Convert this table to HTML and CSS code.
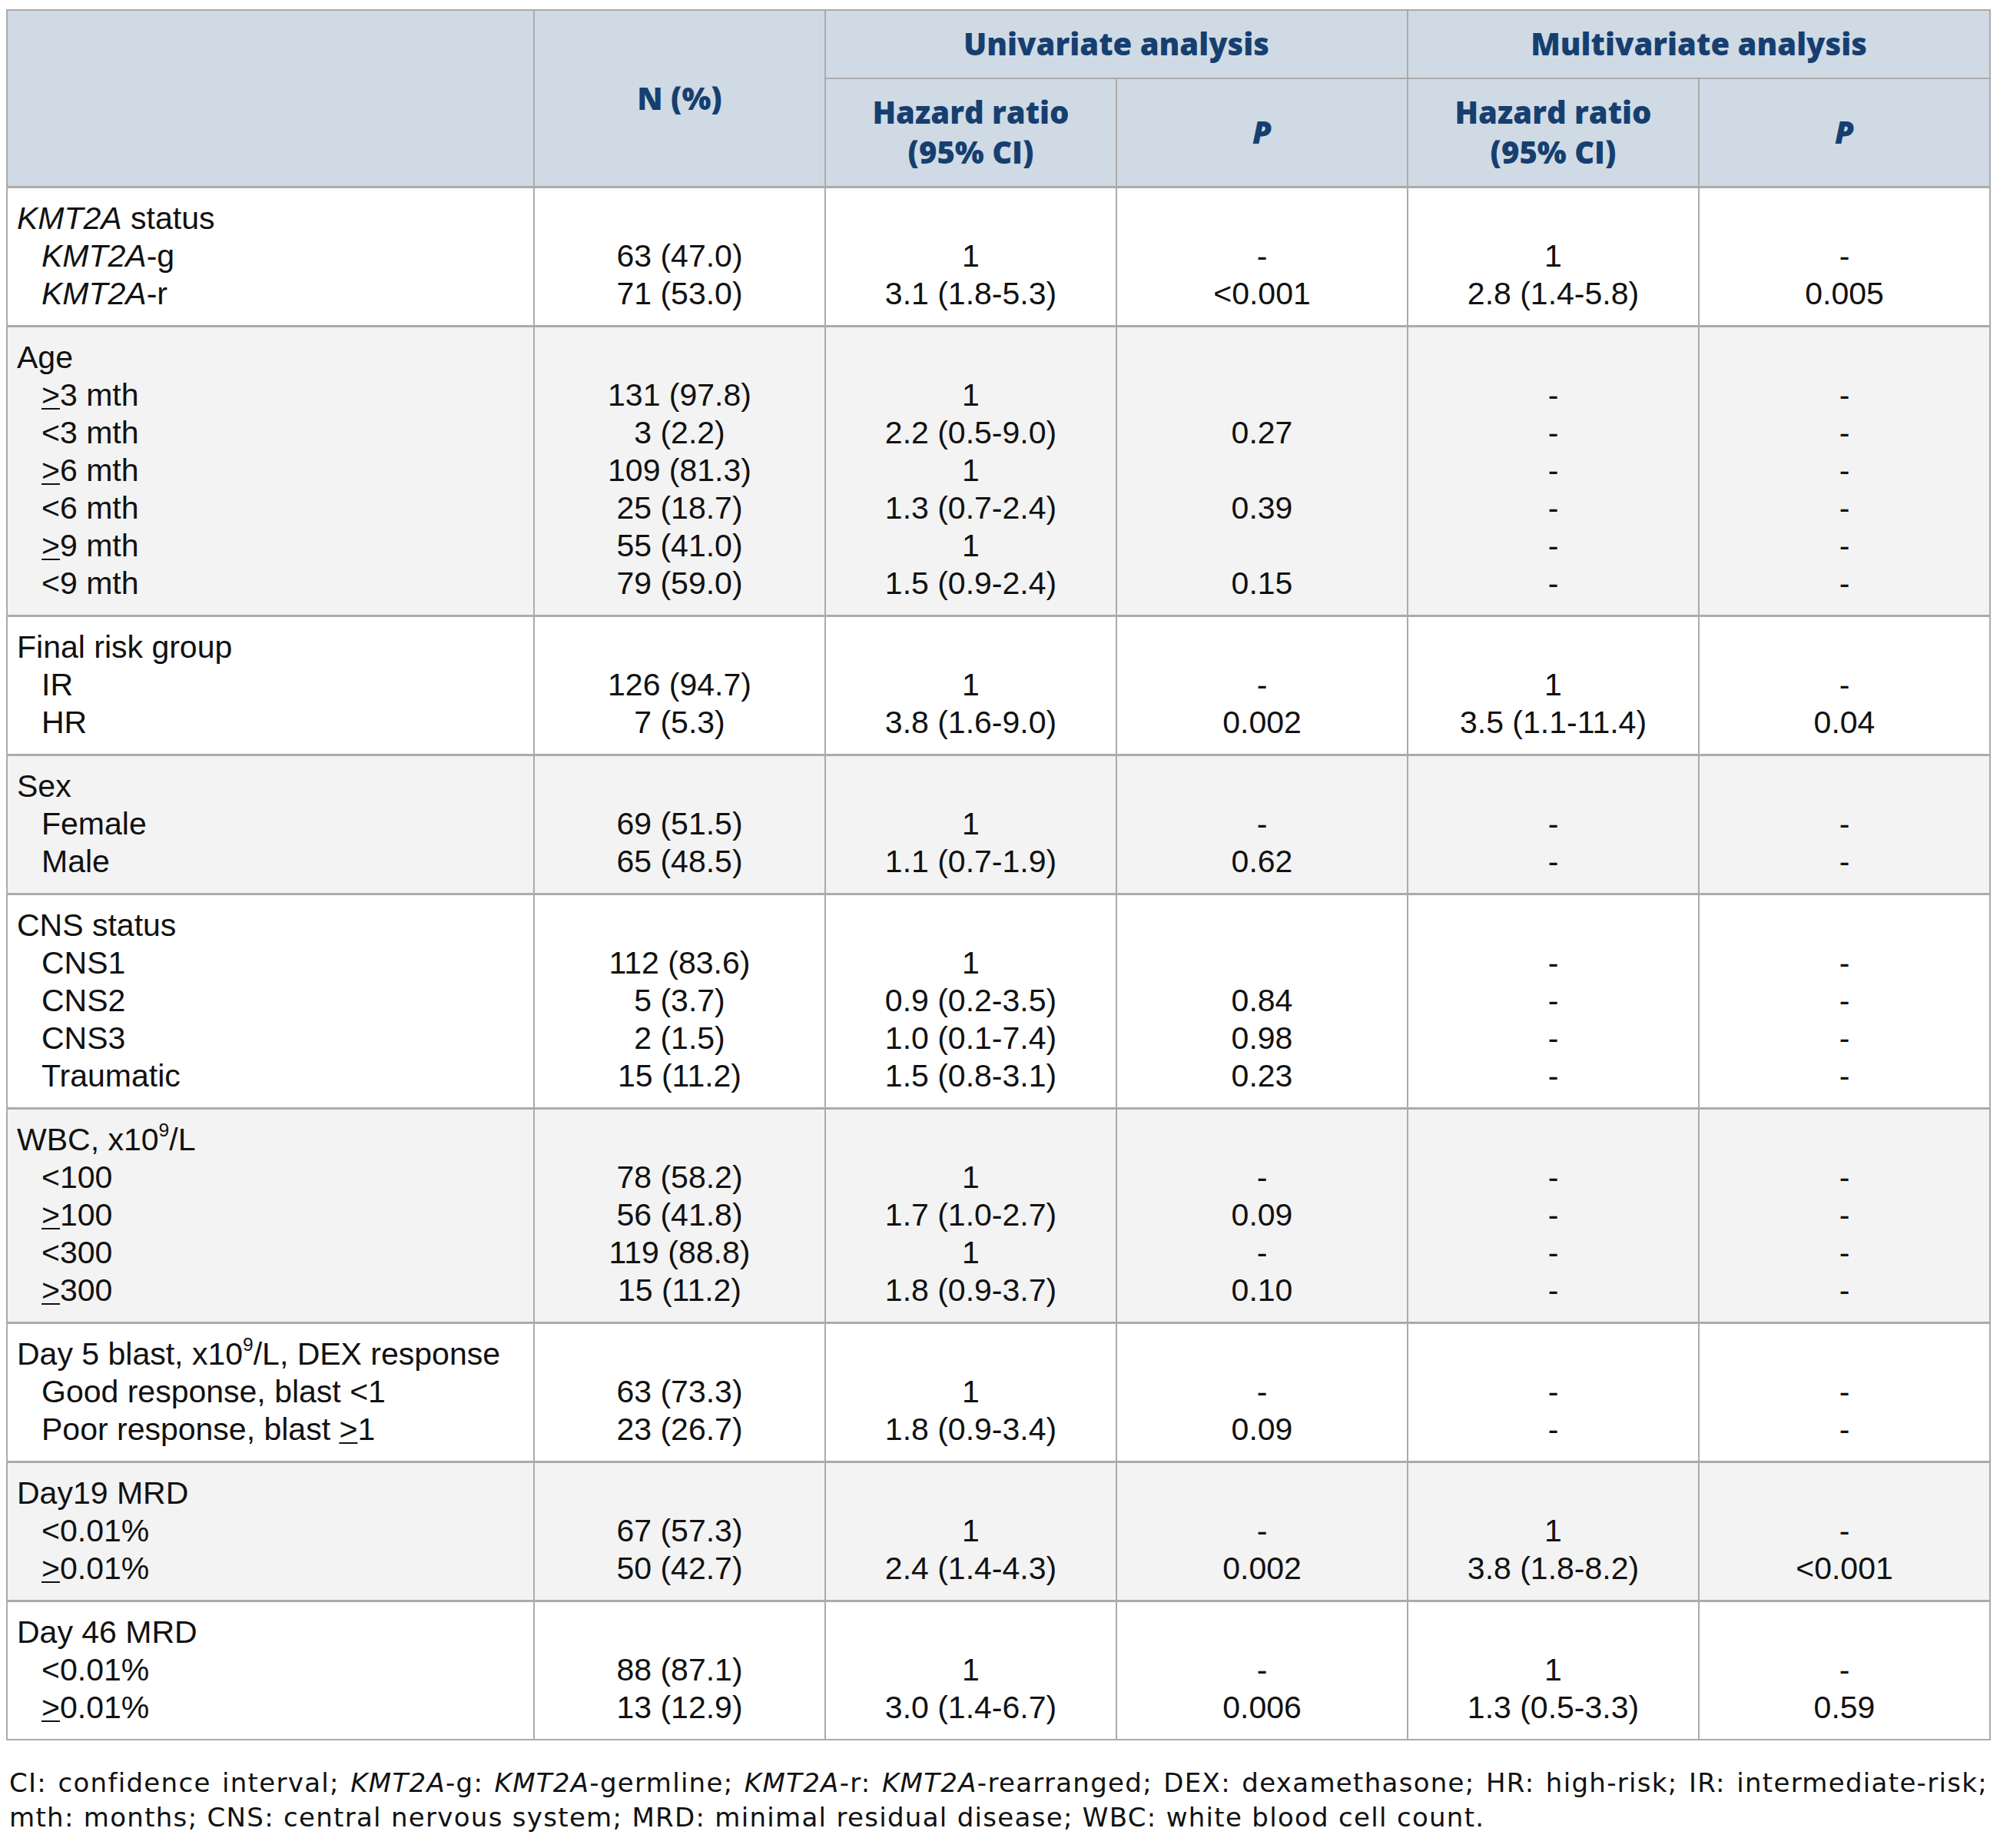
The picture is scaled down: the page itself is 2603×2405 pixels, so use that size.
FILE: index.html
```html
<!DOCTYPE html>
<html lang="en">
<head>
<meta charset="utf-8">
<title>Cox regression analysis</title>
<link rel="stylesheet" href="styles.css">
</head>
<body>
<table class="results">
  <colgroup>
    <col class="c-label">
    <col class="c-data"><col class="c-data"><col class="c-data"><col class="c-data"><col class="c-data">
  </colgroup>
  <thead>
    <tr>
      <th rowspan="2" class="blank"></th>
      <th rowspan="2">N (%)</th>
      <th colspan="2">Univariate analysis</th>
      <th colspan="2">Multivariate analysis</th>
    </tr>
    <tr>
      <th>Hazard ratio<br>(95% CI)</th>
      <th><i>P</i></th>
      <th>Hazard ratio<br>(95% CI)</th>
      <th><i>P</i></th>
    </tr>
  </thead>
  <tbody>
    <tr class="white">
      <td class="label"><div><i>KMT2A</i> status</div><div class="sub"><i>KMT2A</i>-g</div><div class="sub"><i>KMT2A</i>-r</div></td>
      <td><div>&nbsp;</div><div>63 (47.0)</div><div>71 (53.0)</div></td>
      <td><div>&nbsp;</div><div>1</div><div>3.1 (1.8-5.3)</div></td>
      <td><div>&nbsp;</div><div>-</div><div>&lt;0.001</div></td>
      <td><div>&nbsp;</div><div>1</div><div>2.8 (1.4-5.8)</div></td>
      <td><div>&nbsp;</div><div>-</div><div>0.005</div></td>
    </tr>
    <tr class="grey">
      <td class="label"><div>Age</div><div class="sub"><span class="ge">&gt;</span>3 mth</div><div class="sub">&lt;3 mth</div><div class="sub"><span class="ge">&gt;</span>6 mth</div><div class="sub">&lt;6 mth</div><div class="sub"><span class="ge">&gt;</span>9 mth</div><div class="sub">&lt;9 mth</div></td>
      <td><div>&nbsp;</div><div>131 (97.8)</div><div>3 (2.2)</div><div>109 (81.3)</div><div>25 (18.7)</div><div>55 (41.0)</div><div>79 (59.0)</div></td>
      <td><div>&nbsp;</div><div>1</div><div>2.2 (0.5-9.0)</div><div>1</div><div>1.3 (0.7-2.4)</div><div>1</div><div>1.5 (0.9-2.4)</div></td>
      <td><div>&nbsp;</div><div>&nbsp;</div><div>0.27</div><div>&nbsp;</div><div>0.39</div><div>&nbsp;</div><div>0.15</div></td>
      <td><div>&nbsp;</div><div>-</div><div>-</div><div>-</div><div>-</div><div>-</div><div>-</div></td>
      <td><div>&nbsp;</div><div>-</div><div>-</div><div>-</div><div>-</div><div>-</div><div>-</div></td>
    </tr>
    <tr class="white">
      <td class="label"><div>Final risk group</div><div class="sub">IR</div><div class="sub">HR</div></td>
      <td><div>&nbsp;</div><div>126 (94.7)</div><div>7 (5.3)</div></td>
      <td><div>&nbsp;</div><div>1</div><div>3.8 (1.6-9.0)</div></td>
      <td><div>&nbsp;</div><div>-</div><div>0.002</div></td>
      <td><div>&nbsp;</div><div>1</div><div>3.5 (1.1-11.4)</div></td>
      <td><div>&nbsp;</div><div>-</div><div>0.04</div></td>
    </tr>
    <tr class="grey">
      <td class="label"><div>Sex</div><div class="sub">Female</div><div class="sub">Male</div></td>
      <td><div>&nbsp;</div><div>69 (51.5)</div><div>65 (48.5)</div></td>
      <td><div>&nbsp;</div><div>1</div><div>1.1 (0.7-1.9)</div></td>
      <td><div>&nbsp;</div><div>-</div><div>0.62</div></td>
      <td><div>&nbsp;</div><div>-</div><div>-</div></td>
      <td><div>&nbsp;</div><div>-</div><div>-</div></td>
    </tr>
    <tr class="white">
      <td class="label"><div>CNS status</div><div class="sub">CNS1</div><div class="sub">CNS2</div><div class="sub">CNS3</div><div class="sub">Traumatic</div></td>
      <td><div>&nbsp;</div><div>112 (83.6)</div><div>5 (3.7)</div><div>2 (1.5)</div><div>15 (11.2)</div></td>
      <td><div>&nbsp;</div><div>1</div><div>0.9 (0.2-3.5)</div><div>1.0 (0.1-7.4)</div><div>1.5 (0.8-3.1)</div></td>
      <td><div>&nbsp;</div><div>&nbsp;</div><div>0.84</div><div>0.98</div><div>0.23</div></td>
      <td><div>&nbsp;</div><div>-</div><div>-</div><div>-</div><div>-</div></td>
      <td><div>&nbsp;</div><div>-</div><div>-</div><div>-</div><div>-</div></td>
    </tr>
    <tr class="grey">
      <td class="label"><div>WBC, x10<sup>9</sup>/L</div><div class="sub">&lt;100</div><div class="sub"><span class="ge">&gt;</span>100</div><div class="sub">&lt;300</div><div class="sub"><span class="ge">&gt;</span>300</div></td>
      <td><div>&nbsp;</div><div>78 (58.2)</div><div>56 (41.8)</div><div>119 (88.8)</div><div>15 (11.2)</div></td>
      <td><div>&nbsp;</div><div>1</div><div>1.7 (1.0-2.7)</div><div>1</div><div>1.8 (0.9-3.7)</div></td>
      <td><div>&nbsp;</div><div>-</div><div>0.09</div><div>-</div><div>0.10</div></td>
      <td><div>&nbsp;</div><div>-</div><div>-</div><div>-</div><div>-</div></td>
      <td><div>&nbsp;</div><div>-</div><div>-</div><div>-</div><div>-</div></td>
    </tr>
    <tr class="white">
      <td class="label"><div>Day 5 blast, x10<sup>9</sup>/L, DEX response</div><div class="sub">Good response, blast &lt;1</div><div class="sub">Poor response, blast <span class="ge">&gt;</span>1</div></td>
      <td><div>&nbsp;</div><div>63 (73.3)</div><div>23 (26.7)</div></td>
      <td><div>&nbsp;</div><div>1</div><div>1.8 (0.9-3.4)</div></td>
      <td><div>&nbsp;</div><div>-</div><div>0.09</div></td>
      <td><div>&nbsp;</div><div>-</div><div>-</div></td>
      <td><div>&nbsp;</div><div>-</div><div>-</div></td>
    </tr>
    <tr class="grey">
      <td class="label"><div>Day19 MRD</div><div class="sub">&lt;0.01%</div><div class="sub"><span class="ge">&gt;</span>0.01%</div></td>
      <td><div>&nbsp;</div><div>67 (57.3)</div><div>50 (42.7)</div></td>
      <td><div>&nbsp;</div><div>1</div><div>2.4 (1.4-4.3)</div></td>
      <td><div>&nbsp;</div><div>-</div><div>0.002</div></td>
      <td><div>&nbsp;</div><div>1</div><div>3.8 (1.8-8.2)</div></td>
      <td><div>&nbsp;</div><div>-</div><div>&lt;0.001</div></td>
    </tr>
    <tr class="white">
      <td class="label"><div>Day 46 MRD</div><div class="sub">&lt;0.01%</div><div class="sub"><span class="ge">&gt;</span>0.01%</div></td>
      <td><div>&nbsp;</div><div>88 (87.1)</div><div>13 (12.9)</div></td>
      <td><div>&nbsp;</div><div>1</div><div>3.0 (1.4-6.7)</div></td>
      <td><div>&nbsp;</div><div>-</div><div>0.006</div></td>
      <td><div>&nbsp;</div><div>1</div><div>1.3 (0.5-3.3)</div></td>
      <td><div>&nbsp;</div><div>-</div><div>0.59</div></td>
    </tr>
  </tbody>
</table>
<div class="footnote">
  <div class="fn-line full">CI: confidence interval; <i>KMT2A</i>-g: <i>KMT2A</i>-germline; <i>KMT2A</i>-r: <i>KMT2A</i>-rearranged; DEX: dexamethasone; HR: high-risk; IR: intermediate-risk;</div>
  <div class="fn-line">mth: months; CNS: central nervous system; MRD: minimal residual disease; WBC: white blood cell count.</div>
</div>
</body>
</html>
```
FILE: styles.css
```css
html, body {
  background: #ffffff;
}
body {
  margin: 12px 8px;
  color: #111111;
  font-family: "Liberation Sans", Arial, sans-serif;
}
.results {
  width: 2581px;
  border-collapse: collapse;
  table-layout: fixed;
  font-size: 41px;
}
.c-label { width: 686px; }
.c-data { width: 379px; }
.results th,
.results td {
  border: 2px solid #ababab;
}
.results thead th {
  background: #cfdae4;
  color: #163f70;
  font-family: "Open Sans", "Noto Sans", sans-serif;
  font-weight: 800;
  font-size: 40px;
  line-height: 52px;
  padding: 17px 8px 18px;
  text-align: center;
  vertical-align: middle;
}
.results thead th i {
  font-style: italic;
}
.results tbody td {
  padding: 15px 8px 16px;
  line-height: 49px;
  text-align: center;
  vertical-align: top;
  white-space: nowrap;
}
.results tbody tr {
  border-top: 3px solid #ababab;
}
.results tbody td.label {
  text-align: left;
  padding-left: 12px;
}
.label .sub {
  padding-left: 32px;
}
.white td { background: #ffffff; }
.grey td { background: #f3f3f3; }
.ge {
  text-decoration: underline;
  text-decoration-thickness: 2px;
  text-underline-offset: 3px;
}
sup {
  font-size: 0.6em;
  line-height: 0;
  vertical-align: 0.75em;
}
.footnote {
  width: 2575px;
  margin-top: 33px;
  padding-left: 4px;
  font-family: "DejaVu Sans", "Noto Sans", sans-serif;
  font-size: 34px;
  letter-spacing: 1.3px;
  line-height: 45px;
  color: #111111;
}
.fn-line.full {
  text-align: justify;
  text-align-last: justify;
}
```
